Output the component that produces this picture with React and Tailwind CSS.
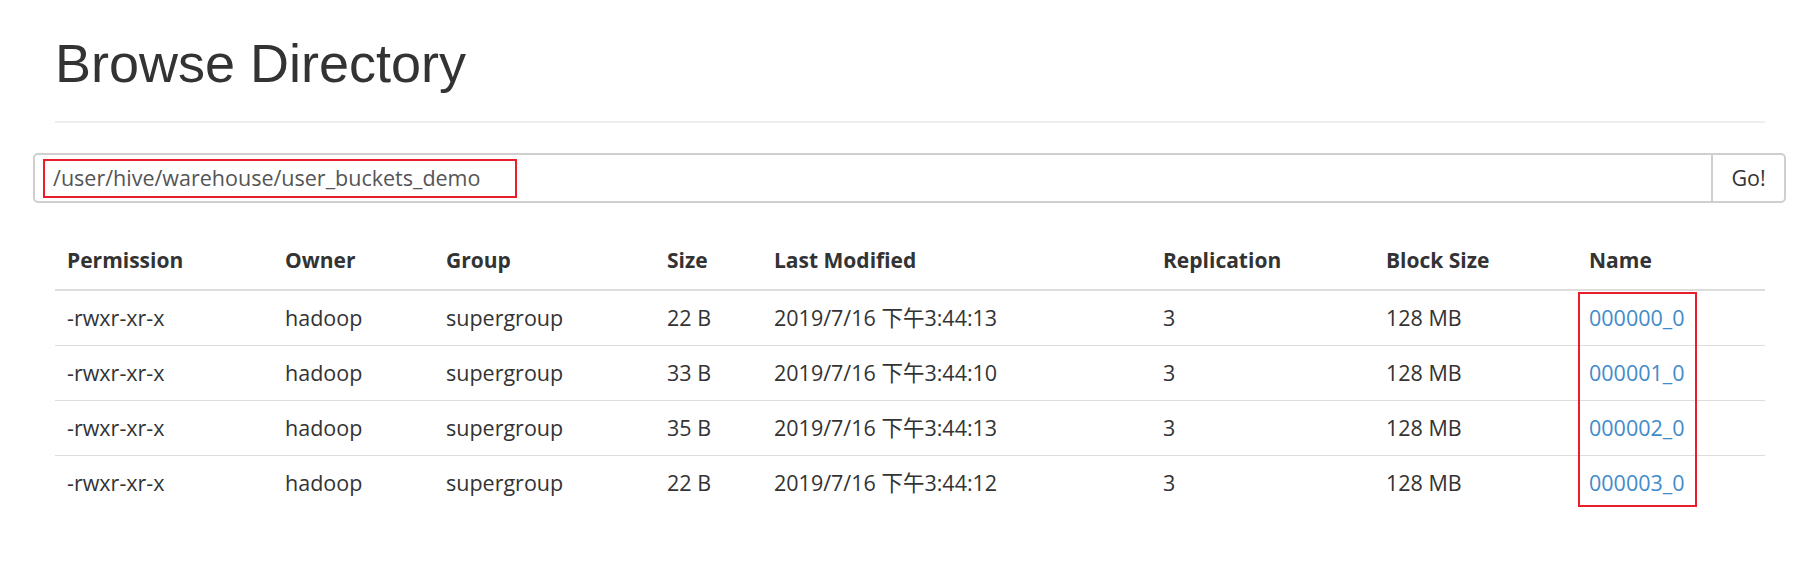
import React from 'react';

const COLUMNS = ['Permission', 'Owner', 'Group', 'Size', 'Last Modified', 'Replication', 'Block Size', 'Name'];

const FILES = [
  { size: '22 B', modified: '2019/7/16 下午3:44:13', name: '000000_0' },
  { size: '33 B', modified: '2019/7/16 下午3:44:10', name: '000001_0' },
  { size: '35 B', modified: '2019/7/16 下午3:44:13', name: '000002_0' },
  { size: '22 B', modified: '2019/7/16 下午3:44:12', name: '000003_0' },
];

const GRID = 'grid grid-cols-[218px_161px_221px_107px_389px_223px_203px_188px]';
const BODY_FONT = "font-['Open_Sans','Noto_Sans_CJK_SC',sans-serif]";

function FileRow({ file, first }) {
  const cells = ['-rwxr-xr-x', 'hadoop', 'supergroup', file.size, file.modified, '3', '128 MB'];

  return (
    <div className={`${GRID} items-center ${first ? 'h-[54px]' : 'h-[55px] border-t border-[#dddddd]'}`}>
      {cells.map((cell, index) => (
        <div key={index} className="pl-3 whitespace-nowrap">
          {cell}
        </div>
      ))}
      <div className="pl-3">
        <a href="#" className="text-[#428bca]">
          {file.name}
        </a>
      </div>
    </div>
  );
}

export default function App() {
  return (
    <div className="h-[561px] w-full overflow-hidden bg-white text-[#333333]">
      <h1 className="px-[55px] pt-[33px] font-['Liberation_Sans',Arial,sans-serif] text-[54px] leading-[60px] font-normal">
        Browse Directory
      </h1>
      <div className="mx-[55px] mt-[28px] h-[2px] w-[1710px] bg-[#eeeeee]" />

      <div className={`ml-[33px] mt-[30px] flex h-[50px] w-[1753px] rounded-[5px] border-2 border-[#cfcfcf] ${BODY_FONT} text-[21.5px]`}>
        <div className="flex flex-1 items-center pl-[8px]">
          <div className="flex h-[39px] w-[474px] items-center border-2 border-[#e81f2b] pl-[8px] text-[#555555]">
            /user/hive/warehouse/user_buckets_demo
          </div>
        </div>
        <button type="button" className="w-[73px] border-l-2 border-[#cfcfcf] text-center text-[#333333]">
          Go!
        </button>
      </div>

      <div className={`relative mx-[55px] mt-[30px] w-[1710px] ${BODY_FONT} text-[21.5px]`}>
        <div className={`${GRID} h-[58px] items-center border-b-2 border-[#dddddd] text-[21px] font-bold`}>
          {COLUMNS.map((col) => (
            <div key={col} className="pl-3">
              {col}
            </div>
          ))}
        </div>
        {FILES.map((file, index) => (
          <FileRow key={file.name} file={file} first={index === 0} />
        ))}
        <div className="pointer-events-none absolute left-[1523px] top-[59px] h-[215px] w-[119px] border-2 border-[#e81f2b]" />
      </div>
    </div>
  );
}
